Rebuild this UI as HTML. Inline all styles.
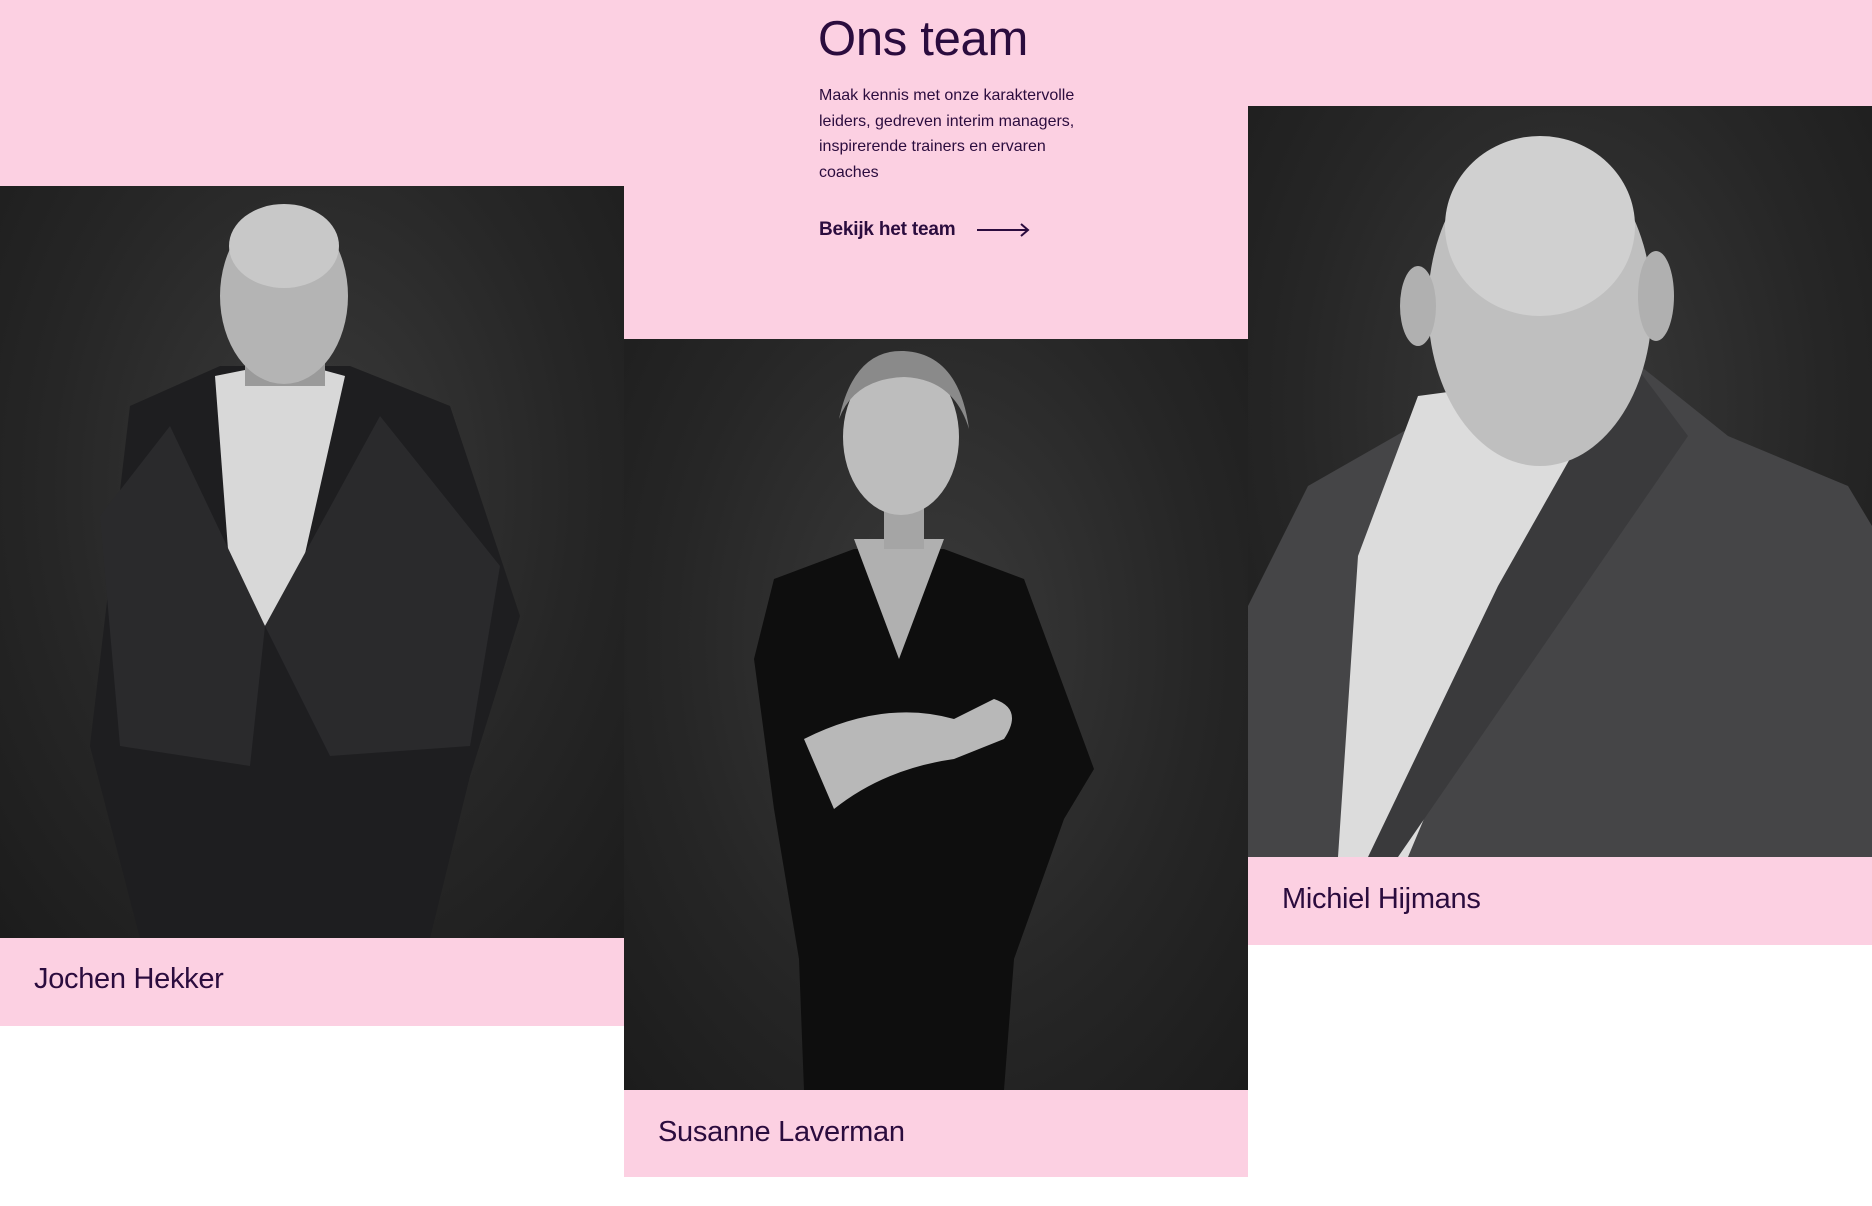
<!DOCTYPE html>
<html><head><meta charset="utf-8">
<style>
*{margin:0;padding:0;box-sizing:border-box}
body{width:1872px;height:1206px;background:#fff;position:relative;overflow:hidden;font-family:"Liberation Sans",Arial,sans-serif;color:#2b0c3e}
.pink{position:absolute;background:#fcd0e2}
.photo{position:absolute;width:624px;height:752px;background:radial-gradient(ellipse at 50% 40%,#3a3a3a 0%,#262626 60%,#1c1c1c 100%);overflow:hidden}
.photo svg{position:absolute;left:0;top:0}
.name{position:absolute;font-size:29px;letter-spacing:-0.3px;color:#2b0c3e}
h1{position:absolute;left:818px;top:11px;font-size:49px;font-weight:400;letter-spacing:-0.3px;color:#2b0c3e}
.p{position:absolute;left:819px;top:83px;width:262px;font-size:16px;line-height:25.7px;color:#2b0c3e}
.link{position:absolute;left:819px;top:219px;font-size:19px;font-weight:600;color:#2b0c3e;letter-spacing:-0.2px}
</style></head><body>
<div class="pink" style="left:0;top:0;width:624px;height:186px"></div>
<div class="pink" style="left:624px;top:0;width:624px;height:339px"></div>
<div class="pink" style="left:1248px;top:0;width:624px;height:106px"></div>

<h1>Ons team</h1>
<div class="p">Maak kennis met onze karaktervolle leiders, gedreven interim managers, inspirerende trainers en ervaren coaches</div>
<div class="link">Bekijk het team</div>
<svg style="position:absolute;left:975px;top:222px" width="56" height="16" viewBox="0 0 56 16"><path d="M2 8H53M46 2L53 8L46 14" fill="none" stroke="#2b0c3e" stroke-width="2"/></svg>

<div class="photo" style="left:0;top:186px">
<svg width="624" height="752" viewBox="0 0 624 752">
<path d="M130 220 L220 180 L350 180 L450 220 L520 430 L470 590 L430 752 L140 752 L90 560 Z" fill="#1e1e20"/>
<path d="M215 190 L290 175 L345 190 L300 390 L265 440 L230 390 Z" fill="#d8d8d8"/>
<path d="M170 240 L265 440 L250 580 L120 560 L100 330Z" fill="#2a2a2c"/>
<path d="M380 230 L265 440 L330 570 L470 560 L500 380Z" fill="#2a2a2c"/>
<rect x="245" y="140" width="80" height="60" fill="#9a9a9a"/>
<ellipse cx="284" cy="110" rx="64" ry="88" fill="#b4b4b4"/>
<ellipse cx="284" cy="60" rx="55" ry="42" fill="#c8c8c8"/>
</svg></div>
<div class="pink" style="left:0;top:938px;width:624px;height:88px"></div>
<div class="name" style="left:34px;top:963px">Jochen Hekker</div>

<div class="photo" style="left:624px;top:339px">
<svg width="624" height="751" viewBox="0 0 624 751">
<path d="M150 240 L230 210 L320 210 L400 240 L470 430 L440 480 L390 620 L380 751 L180 751 L175 620 L150 470 L130 320Z" fill="#0e0e0e"/>
<path d="M230 200 L320 200 L275 320Z" fill="#b0b0b0"/>
<path d="M260 140 L300 140 L300 210 L260 210Z" fill="#a5a5a5"/>
<path d="M180 400 Q260 360 330 380 L370 360 Q400 370 380 400 L330 420 Q260 430 210 470Z" fill="#b8b8b8"/>
<ellipse cx="277" cy="98" rx="58" ry="78" fill="#bdbdbd"/>
<path d="M215 80 Q230 10 280 12 Q335 15 345 90 Q330 40 280 38 Q230 40 215 80Z" fill="#8a8a8a"/>
</svg></div>
<div class="pink" style="left:624px;top:1090px;width:624px;height:87px"></div>
<div class="name" style="left:658px;top:1116px">Susanne Laverman</div>

<div class="photo" style="left:1248px;top:106px;height:751px">
<svg width="624" height="751" viewBox="0 0 624 751">
<path d="M0 500 L60 380 L200 300 L380 250 L480 330 L600 380 L624 420 L624 751 L0 751Z" fill="#454547"/>
<path d="M170 290 L320 270 L380 260 L240 560 L160 751 L90 751 L110 450Z" fill="#dcdcdc"/>
<path d="M380 250 L440 330 L150 751 L120 751 L250 480Z" fill="#3a3a3c"/>
<ellipse cx="292" cy="200" rx="112" ry="160" fill="#bfbfbf"/>
<ellipse cx="292" cy="120" rx="95" ry="90" fill="#d0d0d0"/>
<ellipse cx="170" cy="200" rx="18" ry="40" fill="#b0b0b0"/>
<ellipse cx="408" cy="190" rx="18" ry="45" fill="#b0b0b0"/>
</svg></div>
<div class="pink" style="left:1248px;top:857px;width:624px;height:88px"></div>
<div class="name" style="left:1282px;top:883px">Michiel Hijmans</div>
</body></html>
